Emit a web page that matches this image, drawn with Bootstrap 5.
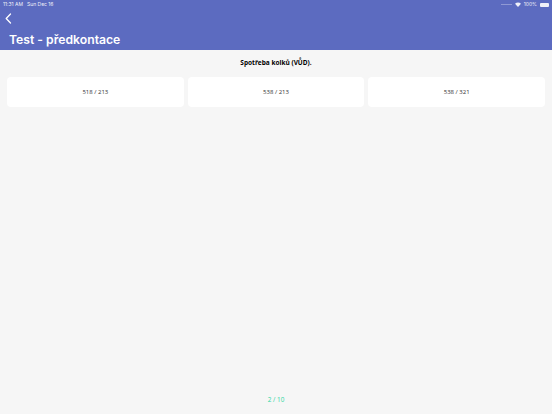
<!DOCTYPE html>
<html lang="cs">
<head>
<meta charset="utf-8">
<title>Test - předkontace</title>
<link rel="stylesheet" href="https://cdn.jsdelivr.net/npm/bootstrap@5.3.0/dist/css/bootstrap.min.css">
<style>
html,body{height:100%}
body{background:#f6f6f6;font-family:"Open Sans","Liberation Sans",sans-serif;overflow:hidden}
.app-shell{height:414px}
.app-head{background:#5c6bc0;height:50px;color:#fff}
.status-row{height:9px;padding:0 3px;font-family:Inter,"Liberation Sans",sans-serif;font-size:5px;line-height:9px;opacity:.9}
.status-right{gap:3px}
.back-row{height:19px;padding-left:5px}
.page-title{font-family:Inter,"Liberation Sans",sans-serif;font-size:12.2px;font-weight:600;line-height:21px;margin:0;padding-left:9px;padding-top:1px}
.prompt{font-size:6.5px;font-weight:700;color:#000;line-height:12px;margin-top:7px;margin-bottom:8px}
.choices{padding:0 7px}
.choice{background:#fff;border-radius:4px;height:30px;font-size:6px;color:#333;flex:1 1 0}
.pager{font-size:6.4px;color:#2fd6a3;line-height:10px;margin-bottom:9px}
.batt{width:9px;height:4px;background:#fff;border-radius:1px}
.signal{width:11px;height:1px;background:rgba(255,255,255,.35)}
</style>
</head>
<body>
<div class="app-shell d-flex flex-column">
  <header class="app-head">
    <div class="status-row d-flex justify-content-between align-items-center">
      <div class="d-flex gap-1"><span>11:31 AM</span><span>Sun Dec 16</span></div>
      <div class="status-right d-flex align-items-center">
        <span class="signal"></span>
        <svg width="6" height="5" viewBox="0 0 12 10" aria-hidden="true"><path d="M6 10 0 3.5C3.500 0 8.500 0 12 3.500z" fill="#fff"/></svg>
        <span>100%</span>
        <span class="batt"></span>
      </div>
    </div>
    <div class="back-row d-flex align-items-center">
      <svg width="7" height="11" viewBox="0 0 7 11" fill="none" aria-hidden="true"><path d="M5.500 1 1.200 5.500 5.500 10" stroke="#fff" stroke-width="1.300" stroke-linecap="round" stroke-linejoin="round"/></svg>
    </div>
    <h1 class="page-title">Test - předkontace</h1>
  </header>
  <main class="flex-grow-1 d-flex flex-column">
    <p class="prompt text-center">Spotřeba kolků (VŮD).</p>
    <div class="choices d-flex gap-1">
      <div class="choice d-flex align-items-center justify-content-center">518 / 213</div>
      <div class="choice d-flex align-items-center justify-content-center">538 / 213</div>
      <div class="choice d-flex align-items-center justify-content-center">538 / 321</div>
    </div>
    <div class="pager text-center mt-auto">2 / 10</div>
  </main>
</div>
<script src="https://cdn.jsdelivr.net/npm/bootstrap@5.3.0/dist/js/bootstrap.bundle.min.js"></script>
</body>
</html>
